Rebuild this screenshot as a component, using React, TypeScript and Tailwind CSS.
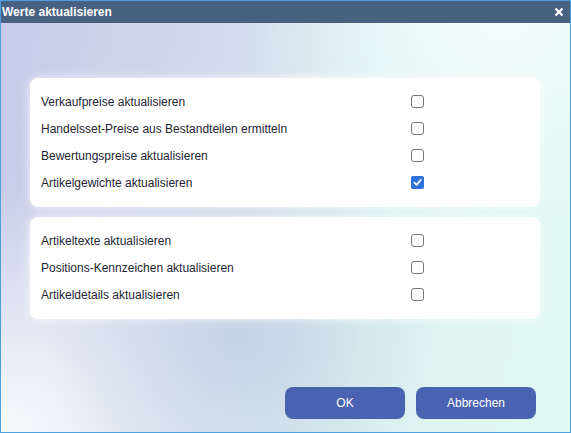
import { FC } from 'react'

type Option = { label: string; checked?: boolean }

const groupA: Option[] = [
  { label: 'Verkaufpreise aktualisieren' },
  { label: 'Handelsset-Preise aus Bestandteilen ermitteln' },
  { label: 'Bewertungspreise aktualisieren' },
  { label: 'Artikelgewichte aktualisieren', checked: true },
]

const groupB: Option[] = [
  { label: 'Artikeltexte aktualisieren' },
  { label: 'Positions-Kennzeichen aktualisieren' },
  { label: 'Artikeldetails aktualisieren' },
]

const Box: FC<{ checked?: boolean }> = ({ checked }) =>
  checked ? (
    <span className="flex h-[13px] w-[13px] items-center justify-center rounded-[2px] bg-[#2f6fdc]">
      <svg width="9" height="9" viewBox="0 0 10 10">
        <path d="M1.5 5.2 L4 7.6 L8.6 2.2" fill="none" stroke="white" strokeWidth="2" strokeLinecap="round" strokeLinejoin="round" />
      </svg>
    </span>
  ) : (
    <span className="h-[13px] w-[13px] rounded-[3px] border border-[#767676] bg-white" />
  )

const Card: FC<{ options: Option[] }> = ({ options }) => (
  <div className="rounded-lg bg-white pt-[10px] pb-[11px] pl-[11px] shadow-[0_0_10px_rgba(255,255,255,0.8)]">
    {options.map(({ label, checked }, index) => (
      <div key={index} className="flex h-[27px] items-center">
        <span className="w-[370px] text-[12px] text-[#1e2433]">{label}</span>
        <Box checked={checked} />
      </div>
    ))}
  </div>
)

export default function App() {
  return (
    <div className="flex h-[433px] w-[571px] flex-col overflow-hidden border border-[#4ba0e0] font-['Liberation_Sans',Arial,sans-serif] bg-[radial-gradient(ellipse_at_42%_78%,rgba(190,204,224,0.75),transparent_42%),radial-gradient(ellipse_at_0%_100%,#f6fbfc,transparent_40%),radial-gradient(ellipse_at_88%_4%,#f4fefc,transparent_35%),linear-gradient(100deg,#c5cbe8_0%,#d2daec_35%,#dcf2f1_65%,#e1f9f3_100%)]">
      <div className="flex h-[22px] shrink-0 items-center justify-between bg-[#496181] pl-[1px] pr-[6px]">
        <span className="text-[12px] font-bold text-white">Werte aktualisieren</span>
        <svg width="10" height="10" viewBox="0 0 10 10">
          <path d="M1.5 1.5 L8.5 8.5 M8.5 1.5 L1.5 8.5" stroke="white" strokeWidth="2.2" />
        </svg>
      </div>
      <div className="flex flex-col gap-[10px] pl-[29px] pr-[30px] pt-[55px]">
        <Card options={groupA} />
        <Card options={groupB} />
      </div>
      <div className="mt-auto flex justify-end gap-[11px] pb-[13px] pr-[34px]">
        <button className="h-[32px] w-[120px] rounded-lg bg-[#4a63b1] text-[12px] text-white">OK</button>
        <button className="h-[32px] w-[120px] rounded-lg bg-[#4a63b1] text-[12px] text-white">Abbrechen</button>
      </div>
    </div>
  )
}
